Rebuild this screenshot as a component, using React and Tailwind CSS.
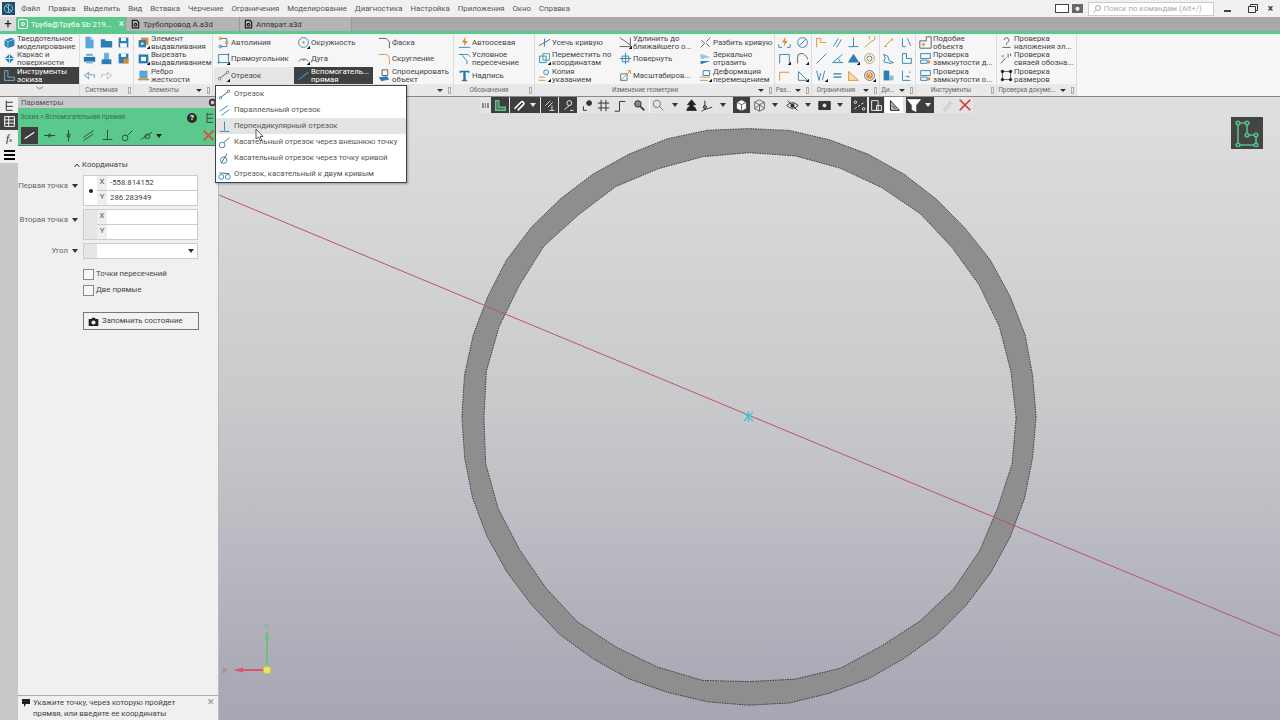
import React from "react";

const B = "#2b7fb5", G = "#555", K = "#222", O = "#e08a2c", T = "#3a9a9a";

function Ic({ s = 13, v = 16, corner, cornerC = "#111", children, className = "" }) {
  return (
    <svg width={s} height={s} viewBox={`0 0 ${v} ${v}`} fill="none" strokeWidth="1.1" className={"shrink-0 " + className}>
      {children}
      {corner && <path d="M16 12v4h-4z" fill={cornerC} />}
    </svg>
  );
}

const icons = {
  solid: <><path d="M2 5l8-3 4 2v8l-8 3-4-3z" fill={B} /><path d="M2 5l4 2 8-3M6 7v8" stroke="#9fd0ee" /></>,
  wire: <><path d="M8 2l6 6-6 6-6-6z" fill={B} /><path d="M2 8h12M8 2v12" stroke="#d6eaf6" /></>,
  sketch: <path d="M2 2h4v8h8v4H2z" stroke="#79b8e0" />,
  doc: <><path d="M3 1h7l3 3v11H3z" fill="#5aa6d8" /><path d="M10 1v3h3" stroke="#fff" /></>,
  folder: <path d="M1 4h5l1 2h8v8H1z" fill={B} />,
  save: <><path d="M2 2h12v12H2z" fill={B} /><path d="M5 2h6v4H5zM4 9h8v5H4z" fill="#fff" /></>,
  print: <><path d="M1 6h14v6H1z" fill="#2a75a8" /><path d="M4 2h8v3H4zM4 11h8v3H4z" fill="#7ab6dc" /></>,
  pdoc: <><path d="M5 1h6v9H5z" fill="#6aaedb" /><path d="M2 9h12v6H2z" fill={B} /></>,
  savec: <><path d="M2 2h12v12H2z" fill={B} /><path d="M5 2h6v4H5z" fill="#fff" /><path d="M8 8h6v6H8z" fill={O} /></>,
  undo: <path d="M14 11V7H7V4L2 8l5 4V9" stroke="#7fa9c9" strokeWidth="1.3" />,
  redo: <path d="M2 11V7h7V4l5 4-5 4V9" stroke="#c4c4c4" strokeWidth="1.3" />,
  extr: <><path d="M5 2h9v9H5z" fill={O} /><path d="M2 5h9v9H2z" fill={B} /><path d="M5 8h3v3H5z" fill="#cfe6f5" /></>,
  cut: <><path d="M2 3h12v11H2z" fill={B} /><path d="M5 6h6v5H5z" fill="#fff" /></>,
  rib: <><path d="M3 2h10v10H3z" fill="#5aa6d8" /><path d="M1 12h14v2H1z" fill={O} /></>,
  auto: <><path d="M4 3h8v10H4" stroke={B} /><circle cx="4" cy="3" r="1.7" stroke={O} /><circle cx="12" cy="8" r="1.7" stroke={O} /><circle cx="4" cy="13" r="1.7" stroke={B} /></>,
  rect: <><path d="M2 3h12v10H2z" stroke={B} /><circle cx="2" cy="13" r="1.2" fill={B} /><circle cx="14" cy="3" r="1.2" fill={B} /></>,
  seg: <><path d="M3 12L13 4" stroke={G} /><circle cx="3" cy="12" r="1.5" stroke={B} fill="#fff" /><circle cx="13" cy="4" r="1.5" stroke={B} fill="#fff" /></>,
  segW: <path d="M2 13L14 4" stroke="#3f93c9" strokeWidth="1.3" />,
  circle: <><circle cx="8" cy="8" r="6" stroke={B} /><circle cx="8" cy="8" r="1.5" fill={O} /></>,
  arc: <><path d="M2 12A7 7 0 0 1 14 12" stroke={B} /><circle cx="8" cy="10" r="1.3" fill={O} /></>,
  cham: <path d="M1 3h9l4 4v8" stroke={G} />,
  fil: <path d="M1 3h7q6 0 6 6v6" stroke={O} />,
  proj: <><path d="M5 1h7v7H5z" stroke={G} /><path d="M1 10l10-1 3 4-10 2z" fill={B} /></>,
  axis: <><path d="M9 1L5 8h3l-1 5 5-7H9z" fill={O} /><path d="M1 14h14" stroke={B} /></>,
  cond: <path d="M1 3h11l3 3M5 4l6 7v4" stroke={B} />,
  T: <path d="M2 2h12v3h-1l-1-1H9.500v9l2 1v1h-7v-1l2-1V4H4L3 5H2z" fill="#2c78ad" />,
  trim: <><path d="M1 12L15 4" stroke={G} /><path d="M8 3v10" stroke={B} /></>,
  move: <><path d="M2 5h8v8H2z" stroke={B} /><path d="M6 2h8v8H6z" stroke={T} /></>,
  copy: <><circle cx="10" cy="4" r="3" stroke={B} /><path d="M1 10h8M1 14h8" stroke={O} /></>,
  extend: <path d="M1 2l13 9M1 13h14M14 2v11" stroke={G} />,
  rot: <path d="M8 1v14M1 8h14M4 5h8v7H4z" stroke={B} />,
  scale: <><path d="M2 6h8v8H2z" stroke={B} /><path d="M2 14L14 2h-4M14 2v4" stroke={O} /></>,
  brk: <path d="M2 14L7 9M9 7l5-5M3 5l4 4M9 9l4 4" stroke={G} />,
  mirror: <><path d="M2 2l12 4-12 3z" fill="#98c6e2" /><path d="M2 15l12-4H2z" fill={B} /></>,
  deform: <><path d="M5 2h8v6H5z" stroke={B} /><path d="M1 10h13M1 14h10" stroke={O} /></>,
  like: <><path d="M1 6h8V1h6v14H1z" stroke={G} /><path d="M4 9h3v3H4z" fill={O} /></>,
  chk: <><path d="M2 2h12v6H2z" stroke={B} /><path d="M2 10h8v4H2z" stroke={B} /><circle cx="12" cy="12" r="2" fill={O} /></>,
  q1: <path d="M5 5a3 3 0 1 1 4 3l-1 1v2M3 14h10" stroke={G} />,
  q2: <path d="M1 14L7 7M2 5h3M10 2v5M13 2v3" stroke={G} />,
  q3: <><path d="M3 3h10v10H3z" stroke={G} /><circle cx="3" cy="3" r="2" fill={K} /><circle cx="13" cy="3" r="2" fill={K} /><circle cx="3" cy="13" r="2" fill={K} /><circle cx="13" cy="13" r="2" fill={K} /></>,
  bolt: <><path d="M9 1L5 8h3l-1 5 5-7H9z" fill={O} /><path d="M1 10v4h4M15 10v4h-4" stroke={B} /></>,
  no: <path d="M8 2a6 6 0 1 0 .01 0M4 12l8-8" stroke={B} />,
  dim: <path d="M2 3h12M2 3v11M14 3v11" stroke={B} />,
  parr: <path d="M2 14V6q0-4 4-4h3l5 5v2" stroke={G} />,
  lshape: <path d="M2 14V4h12" stroke={O} />,
  tri: <path d="M3 14V3l11 11z" stroke={B} />,
  c1: <path d="M2 3h5v5h7M2 3v11" stroke={O} />,
  dbl: <path d="M3 13L9 3M7 14l6-10" stroke={B} />,
  perp: <path d="M8 2v11M2 13h12" stroke={B} />,
  loop: <path d="M2 14L11 6a3.500 3.500 0 1 0-3-2" stroke={O} />,
  slash: <path d="M2 14L14 2" stroke={B} />,
  ang: <path d="M14 3L2 13h13M9 8l3 5" stroke={B} />,
  fill: <path d="M8 2l7 11H1z" fill={B} />,
  ring: <><circle cx="8" cy="8" r="6" stroke={O} /><circle cx="8" cy="8" r="3" stroke={B} /></>,
  vv: <path d="M2 2l3 12 2-9M9 14l3-12" stroke={B} />,
  eq: <path d="M3 6h10M3 10h10" stroke={B} strokeWidth="1.800" />,
  triO: <path d="M2 14V3l12 11z" stroke={O} fill="#f6dcb9" />,
  help: <><circle cx="8" cy="8" r="6" stroke={G} /><circle cx="8" cy="8" r="4" fill={O} /><path d="M6.500 7a1.500 1.500 0 1 1 2 1.500V10" stroke="#fff" /></>,
  d1: <path d="M3 13L13 3M3 13h3M13 3v3" stroke={O} />,
  d2: <path d="M3 3v10h4M9 3l4 9" stroke={B} />,
  d3: <path d="M2 3l5 2 2 6 5 2-4 1-8-2 2-5z" stroke={B} />,
  d4: <path d="M3 2h5v6h6v6H3z" stroke={B} />,
  d5: <><path d="M2 2h7v12H2z" fill={B} /><path d="M9 8h5v6H9z" fill="#8db9d8" /></>,
  d6: <path d="M3 2v12h10M7 9h4v2M12 3v2" stroke={B} />,
};

const I = ({ n, s, corner, cornerC }) => <Ic s={s} corner={corner} cornerC={cornerC}>{icons[n]}</Ic>;

function Row({ n, a, b, active, corner, w, hi }) {
  const cls = active
    ? "bg-[#404040] text-white"
    : hi
    ? "bg-[#e6e6e6] text-[#444]"
    : "text-[#444]";
  return (
    <div className={`h-[16.500px] flex items-center gap-[1px] pl-[3px] ${cls}`} style={w ? { width: w } : undefined}>
      <I n={n} corner={corner} cornerC={active ? "#fff" : "#111"} />
      <div className="leading-[8px] whitespace-nowrap pt-[1px]">
        <div>{a}</div>
        {b && <div>{b}</div>}
      </div>
    </div>
  );
}

function Group({ w, label, caret, grip = true, children, chev }) {
  return (
    <div className="flex flex-col border-r border-[#dcdcdc] shrink-0" style={{ width: w }}>
      <div className="h-[50px] flex">{children}</div>
      <div className="h-[12px] bg-[#e9e9e9] flex items-center text-[6.300px] text-[#666] whitespace-nowrap">
        <span className="flex-1 text-center pt-[2px]">{chev ? <span className="text-[8px] leading-none text-[#777]">︾</span> : label}</span>
        {caret && <span className="ml-[3px] border-x-[3px] border-t-[3px] border-x-transparent border-t-[#333]" />}
        {grip && <span className="ml-[5px] mr-[2px] w-[3px] h-[7px] border border-[#aaa]" />}
      </div>
    </div>
  );
}

function IconGrid({ cols, w, items, px = 0 }) {
  return (
    <div className="grid items-center justify-items-center" style={{ gridTemplateColumns: `repeat(${cols}, 1fr)`, gridAutoRows: "16.500px", width: w, paddingInline: px }}>
      {items.map((it, i) => {
        const corner = it.endsWith("*");
        return <I key={i} n={corner ? it.slice(0, -1) : it} corner={corner} s={13} />;
      })}
    </div>
  );
}

function Caret({ c = "#333", className = "" }) {
  return <span className={"inline-block border-x-[3.500px] border-t-[4px] border-x-transparent " + className} style={{ borderTopColor: c }} />;
}

const TB = ({ dark, w = 18, children }) => (
  <div className={`h-[16px] flex items-center justify-center shrink-0 ${dark ? "bg-[#3e3e3e]" : ""}`} style={{ width: w }}>{children}</div>
);

const S = ({ c = "#333", sw = 1.2, children, s = 13 }) => (
  <svg width={s} height={s} viewBox="0 0 16 16" fill="none" stroke={c} strokeWidth={sw} className="shrink-0">{children}</svg>
);

function Toolbar() {
  return (
    <div className="ml-[261px] h-[16px] flex w-[493px] bg-[#e4e4e4] text-[#333] relative z-[1]">
      <TB w={11}><span className="w-[7px] h-[5px] border-x border-[#888] bg-[repeating-linear-gradient(90deg,#888_0,#888_1px,transparent_1px,transparent_2px)]" /></TB>
      <TB dark w={18}><S c="#5ec98d" sw={1.5}><path d="M2 2h4v8h8v4H2z" fill="#4a7a5c" /></S></TB>
      <div className="w-[1px]" />
      <TB dark w={16}><S c="#fff" sw={2}><path d="M3 12L11 4a2 2 0 0 1 3 3l-7 7" /></S></TB>
      <TB dark w={14}><Caret c="#eee" /></TB>
      <div className="w-[1px]" />
      <TB dark w={17}><S c="#ddd"><path d="M3 8l6-6M6 10l6-6M8 14h6M11 8v6" /></S></TB>
      <div className="w-[1px]" />
      <TB dark w={18}><S c="#eee"><circle cx="9" cy="5" r="3" /><path d="M3 13l6-5M10 14h4" /></S></TB>
      <div className="w-[2px]" />
      <TB w={16}><S><circle cx="10" cy="5" r="3" fill="#333" /><path d="M3 14V9M3 14h4" /></S></TB>
      <TB w={16}><S><path d="M5 1v14M11 1v14M1 5h14M1 11h14" /></S></TB>
      <TB w={16}><S><path d="M2 15h6V3h7" /></S></TB>
      <div className="w-[4px]" />
      <TB w={16}><S><circle cx="6" cy="6" r="4" fill="#888" /><path d="M9 9l5 5" strokeWidth="2" /></S></TB>
      <div className="w-[2px]" />
      <div className="w-[1px] bg-[#fff]" />
      <TB w={16}><S c="#777"><circle cx="6" cy="6" r="4.500" /><path d="M9 9l5 5" /></S></TB>
      <TB w={18}><Caret /></TB>
      <TB w={14}><S c="#222" sw={1}><path d="M8 1l5 6h-3v3H6V7H3zM2 14h12l-2-4H4z" fill="#222" /></S></TB>
      <TB w={16}><S><path d="M6 2v11l9-3M6 13l-4 2" /><circle cx="6" cy="10" r="2" /></S></TB>
      <TB w={18}><Caret /></TB>
      <div className="w-[1px]" />
      <TB dark w={17}><S c="#444" sw={1}><path d="M8 1l6 3v8l-6 3-6-3V4z" fill="#fff" /><path d="M2 4l6 3 6-3M8 7v8" /></S></TB>
      <TB w={18}><S c="#555" sw={1}><path d="M8 1l6 3v8l-6 3-6-3V4zM2 4l6 3 6-3M8 7v8M2 12l6-5 6 5" /></S></TB>
      <TB w={14}><Caret /></TB>
      <TB w={20}><S><path d="M1 8q7-7 14 0-7 7-14 0zM2 2l12 12" /><circle cx="8" cy="8" r="2" fill="#333" /></S></TB>
      <TB w={12}><Caret /></TB>
      <TB w={20}><S><path d="M1 3h14v10H1z" fill="#333" /><circle cx="8" cy="8" r="3" fill="#ddd" /></S></TB>
      <TB w={12}><Caret /></TB>
      <div className="w-[5px]" />
      <TB dark w={16}><S c="#eee"><path d="M2 12L14 4" strokeDasharray="3 2" /><circle cx="3" cy="4" r="1.500" /><circle cx="13" cy="12" r="1.500" /></S></TB>
      <div className="w-[2px]" />
      <TB dark w={15}><S c="#eee"><path d="M2 2h8v12H2zM8 8h6v6H8z" /></S></TB>
      <div className="w-[1px]" />
      <TB w={18}><div className="w-full h-full bg-white flex items-center justify-center"><S c="#222"><path d="M3 2v12h11zM5 8l4 4" fill="#bbb" /></S></div></TB>
      <div className="w-[3px]" />
      <TB dark w={15}><S c="#fff" s={14}><path d="M1 2h14l-5 6v7l-4-2V8z" fill="#fff" /></S></TB>
      <TB dark w={13}><Caret c="#eee" /></TB>
      <div className="w-[2px]" />
      <TB w={22}><S c="#bbb"><path d="M3 13L10 5l2 2-7 8zM10 2l4 4" /></S></TB>
      <TB w={14}><S c="#d93a3a" sw={2} s={14}><path d="M2 2l12 12M14 2L2 14" /></S></TB>
    </div>
  );
}

function ringPoints(cx, cy, rx, ry, n, jitter, seed) {
  const pts = [];
  for (let i = 0; i < n; i++) {
    const a = (i / n) * Math.PI * 2;
    const j = Math.sin(i * 12.9898 + seed) * 43758.5453;
    const d = (j - Math.floor(j) - 0.5) * jitter;
    pts.push(`${(cx + (rx + d) * Math.cos(a)).toFixed(1)} ${(cy + (ry + d) * Math.sin(a)).toFixed(1)}`);
  }
  return "M" + pts.join("L") + "Z";
}

function Scene() {
  const ox = 219, oy = 97;
  const outer = ringPoints(748.5 - ox, 416.5 - oy, 287.5, 288.5, 44, 2, 1);
  const inner = ringPoints(749 - ox, 417.5 - oy, 266, 265.5, 36, 3, 5);
  return (
    <svg className="absolute left-0 top-0" width="1061" height="623" viewBox="0 0 1061 623">
      <path d={outer + inner} fill="#8e8e8e" fillRule="evenodd" />
      <path d={outer} fill="none" stroke="#222" strokeWidth="0.8" strokeDasharray="1.500 1" />
      <path d={inner} fill="none" stroke="#222" strokeWidth="0.8" strokeDasharray="1.500 1" />
      <path d={`M0 ${195 - oy}L1061 ${636 - oy}`} stroke="#bd4f78" strokeWidth="1" />
      <path d={`M${744 - ox} ${413 - oy}l9 8M${753 - ox} ${412 - oy}l-9 9M${748.500 - ox} ${411 - oy}v11`} stroke="#35c8d2" strokeWidth="1.200" />
      <g transform={`translate(${267 - ox} ${670 - oy})`}>
        <path d="M0 0V-38" stroke="#6fbf7f" strokeWidth="2" />
        <path d="M-2.500 -30L0 -38L2.500 -30z" fill="#6fbf7f" />
        <path d="M0 0H-30" stroke="#d8566a" strokeWidth="2" />
        <path d="M-24 -2.500L-34 0L-24 2.500z" fill="#d8566a" />
        <circle r="4" fill="#e8e46a" stroke="#c9b94a" strokeWidth="1" />
        <text x="-45" y="3" fontSize="8" fill="#d8566a" fontFamily="Liberation Sans, sans-serif">X</text>
        <text x="-3" y="-41" fontSize="8" fill="#6fbf7f" fontFamily="Liberation Sans, sans-serif">Y</text>
      </g>
    </svg>
  );
}

function Field({ label, left, xv, yv, dot }) {
  return (
    <div className="flex items-start">
      <div className="w-[60px] text-[#666] pt-[5px] flex justify-end items-center gap-[4px] whitespace-nowrap">
        {label}<Caret c="#333" />
      </div>
      <div className="ml-[5px] w-[115px] h-[31px] border border-[#ccc] flex bg-white">
        <div className={`w-[13px] flex items-center justify-center ${left}`}>{dot && <span className="w-[4px] h-[4px] rounded-full bg-[#222]" />}</div>
        <div className="flex-1 flex flex-col">
          <div className="h-[15px] border-b border-[#ccc] flex items-center"><span className="w-[10px] h-full bg-[#eee] text-center text-[#555]">X</span><span className="ml-[3px] text-[#444]">{xv}</span></div>
          <div className="h-[15px] flex items-center"><span className="w-[10px] h-full bg-[#eee] text-center text-[#555]">Y</span><span className="ml-[3px] text-[#444]">{yv}</span></div>
        </div>
      </div>
    </div>
  );
}

function Panel() {
  return (
    <div className="w-[200px] shrink-0 flex flex-col bg-[#f0f0f0] text-[#444]">
      <div className="h-[11px] bg-[#c8c8c8] flex items-center pl-[3px] text-[#555]">
        Параметры
        <svg className="ml-auto mr-[1px]" width="9" height="9" viewBox="0 0 16 16"><circle cx="8" cy="8" r="5" fill="none" stroke="#333" strokeWidth="3" /></svg>
      </div>
      <div className="h-[38px] bg-[#5cc98c] border-b border-[#666] flex flex-col">
        <div className="h-[19px] flex items-center pl-[2px] pr-[2px] text-[6.600px] text-[#3b6a50]">
          Эскиз &gt; Вспомогательная прямая
          <span className="ml-auto w-[10px] h-[10px] mt-[1px] rounded-full bg-[#2d2d2d] text-white text-[8px] font-bold flex items-center justify-center">?</span>
          <span className="ml-[6px]"><S c="#2d4f3b"><path d="M5 2v12M5 4h7M5 9h7M5 14h7" /></S></span>
        </div>
        <div className="flex items-center h-[17px] pl-[3px] gap-[2.500px]">
          <div className="w-[17px] h-[17px] bg-[#3e3e3e] flex items-center justify-center"><S c="#fff" sw={1.500}><path d="M2 12L14 4" /></S></div>
          <div className="w-[17px] flex justify-center"><S c="#2d4f3b"><path d="M1 8h14" /><circle cx="8" cy="8" r="2" /></S></div>
          <div className="w-[17px] flex justify-center"><S c="#2d4f3b"><path d="M8 1v14" /><circle cx="8" cy="8" r="2" /></S></div>
          <div className="w-[17px] flex justify-center"><S c="#2d4f3b"><path d="M2 10L14 2M2 14L14 6" /></S></div>
          <div className="w-[17px] flex justify-center"><S c="#2d4f3b"><path d="M8 1v12M2 13h12" /></S></div>
          <div className="w-[17px] flex justify-center"><S c="#2d4f3b"><circle cx="5" cy="11" r="3.500" /><path d="M8 8l6-6" /></S></div>
          <div className="w-[17px] flex justify-center"><S c="#2d4f3b"><path d="M1 13L15 4" /><circle cx="9" cy="9" r="3" /></S></div>
          <Caret c="#222" className="ml-[-2px]" />
          <div className="ml-auto mr-[3px]"><S c="#e0483a" sw={2}><path d="M2 2l12 12M14 2L2 14" /></S></div>
        </div>
      </div>
      <div className="flex-1 flex flex-col">
        <div className="mt-[14px] h-[10px] flex items-center pl-[56px] gap-[2px] text-[#444]">
          <svg width="6" height="5" viewBox="0 0 6 5" fill="none" stroke="#333"><path d="M0.500 4L3 1l2.500 3" /></svg>
          Координаты
        </div>
        <div className="mt-[5px] flex flex-col gap-[3px]">
          <Field label="Первая точка" left="bg-white" xv="-558.814152" yv="286.283949" dot />
          <Field label="Вторая точка" left="bg-[#e6e6e6]" />
        </div>
        <div className="flex items-center mt-[3px]">
          <div className="w-[60px] flex justify-end items-center gap-[4px] text-[#666]">Угол<Caret /></div>
          <div className="ml-[5px] w-[115px] h-[16px] border border-[#ccc] bg-white flex items-center">
            <div className="w-[13px] h-full bg-[#e6e6e6]" />
            <Caret className="ml-auto mr-[3px]" />
          </div>
        </div>
        <label className="ml-[65px] mt-[9px] flex items-center gap-[2px] h-[12px]"><span className="w-[11px] h-[11px] border border-[#888] bg-[#f7f7f7]" />Точки пересечений</label>
        <label className="ml-[65px] mt-[4px] flex items-center gap-[2px] h-[12px]"><span className="w-[11px] h-[11px] border border-[#888] bg-[#f7f7f7]" />Две прямые</label>
        <div className="ml-[65px] mt-[16px] w-[116px] h-[18px] border border-[#777] flex items-center pl-[4px] gap-[3px] bg-[#f2f2f2]">
          <svg width="11" height="9" viewBox="0 0 16 13"><path d="M1 3h4l1-2h4l1 2h4v10H1z" fill="#222" /><circle cx="8" cy="8" r="3" fill="#eee" /></svg>
          Запомнить состояние
        </div>
      </div>
      <div className="h-[25px] border-t border-[#aaa] flex pl-[4px] pt-[2px] gap-[3px] text-[#444] leading-[10.500px]">
        <svg className="mt-[1px] shrink-0" width="8" height="8" viewBox="0 0 8 8"><path d="M0 0h8v5H4L2 8V5H0z" fill="#222" /></svg>
        <div>Укажите точку, через которую пройдет<br />прямая, или введите ее координаты</div>
        <span className="ml-auto mr-[3px] text-[#888] text-[9px] leading-none">✕</span>
      </div>
    </div>
  );
}

const menu = ["Файл", "Правка", "Выделить", "Вид", "Вставка", "Черчение", "Ограничения", "Моделирование", "Диагностика", "Настройка", "Приложения", "Окно", "Справка"];

const ddItems = [
  ["Отрезок", <><path d="M3 12L13 4" stroke={G} /><circle cx="3" cy="12" r="1.500" stroke={B} fill="#fff" /><circle cx="13" cy="4" r="1.500" stroke={B} fill="#fff" /></>],
  ["Параллельный отрезок", <path d="M2 9L12 2M4 14L14 7" stroke={B} />],
  ["Перпендикулярный отрезок", <path d="M8 2v11M2 14h12" stroke={B} />],
  ["Касательный отрезок через внешнюю точку", <><circle cx="5" cy="11" r="3.500" stroke={B} /><path d="M7 8l7-6" stroke={G} /></>],
  ["Касательный отрезок через точку кривой", <><circle cx="7" cy="10" r="4" stroke={B} /><path d="M4 14L11 2" stroke={G} /></>],
  ["Отрезок, касательный к двум кривым", <><circle cx="4" cy="11" r="3" stroke={B} /><circle cx="12" cy="11" r="3" stroke={B} /><path d="M2 6l12 1" stroke={G} /></>],
];

export default function App() {
  return (
    <div className="relative w-[1280px] h-[720px] overflow-hidden flex flex-col bg-[#d0d0d0] text-[7.800px] text-[#444]" style={{ fontFamily: 'Roboto, "Noto Sans", sans-serif' }}>
      {/* menu bar */}
      <div className="h-[17px] bg-[#f0f0f0] flex items-center shrink-0">
        <div className="ml-[2px] w-[13px] h-[13px] bg-[#1d4f70] flex items-center justify-center">
          <svg width="11" height="11" viewBox="0 0 16 16" fill="none" stroke="#9fd0e6" strokeWidth="1.200"><circle cx="8" cy="8" r="6" /><path d="M3 3l10 10M8 2v12" /></svg>
        </div>
        <div className="ml-[6px] pt-[1px] flex gap-[8px] text-[#555]">
          {menu.map((m) => <span key={m}>{m}</span>)}
        </div>
        <div className="ml-auto flex items-center">
          <span className="w-[14px] h-[9px] border border-[#444] bg-white" />
          <svg className="ml-[3px]" width="11" height="9" viewBox="0 0 16 13"><path d="M0 0h16v13H0z" fill="#666" /><circle cx="8" cy="7" r="3" fill="#eee" /></svg>
          <div className="ml-[5px] w-[126px] h-[14px] bg-white border border-[#ccc] flex items-center pl-[4px] gap-[3px] text-[#aaa]">
            <svg width="8" height="8" viewBox="0 0 16 16" fill="none" stroke="#888" strokeWidth="1.500"><circle cx="10" cy="6" r="5" /><path d="M6 10l-5 5" /></svg>
            Поиск по командам (Alt+/)
          </div>
          <div className="ml-[10px] w-[7px] h-[1.500px] mt-[5px] bg-[#444]" />
          <svg className="ml-[17px]" width="10" height="9" viewBox="0 0 10 9" fill="none" stroke="#333"><path d="M0.500 2.500h7v6h-7zM2.500 2.500v-2h7v6h-2" /></svg>
          <span className="ml-[10px] mr-[7px] text-[#333] text-[10px] leading-none font-bold">×</span>
        </div>
      </div>
      {/* tabs */}
      <div className="h-[14px] bg-[#a9a9a9] flex items-stretch shrink-0 whitespace-nowrap">
        <div className="w-[16px] bg-[#dcdcdc] text-center text-[#222] text-[13px] leading-[13px]">+</div>
        <div className="w-[110px] bg-[#5cc98c] text-white flex items-center pl-[2px] gap-[3px]">
          <span className="w-[10px] h-[10px] rounded-[2px] border-[1.500px] border-white flex items-center justify-center"><span className="w-[4px] h-[4px] rounded-full border border-white" /></span>
          <span className="pt-[1px]">Труба@Труба Sb 219...</span>
          <span className="ml-auto mr-[2px] text-[10px] leading-none">×</span>
        </div>
        <div className="w-[113px] ml-[1px] bg-[#b4b4b4] flex items-center pl-[3px] gap-[2px] border-r border-[#999] text-[#333]">
          <svg width="11" height="10" viewBox="0 0 16 16" fill="none" stroke="#222" strokeWidth="2"><path d="M3 2h7l3 3v9H3z" /><circle cx="8" cy="9" r="2" /></svg>
          <span className="pt-[1px]">Трубопровод А.a3d</span>
        </div>
        <div className="w-[112px] bg-[#b4b4b4] flex items-center pl-[3px] gap-[2px] border-r border-[#999] text-[#333]">
          <svg width="11" height="10" viewBox="0 0 16 16" fill="none" stroke="#222" strokeWidth="2"><path d="M3 2h7l3 3v9H3z" /><circle cx="8" cy="9" r="2" /></svg>
          <span className="pt-[1px]">Аппарат.a3d</span>
        </div>
      </div>
      <div className="h-[3px] bg-[#5cc98c] shrink-0" />
      {/* ribbon */}
      <div className="h-[63px] bg-[#f6f6f6] border-b border-[#888] flex shrink-0 text-[#444]">
        <Group w={80} chev grip={false}>
          <div className="flex flex-col w-full">
            <Row n="solid" a="Твердотельное" b="моделирование" />
            <Row n="wire" a="Каркас и" b="поверхности" />
            <Row n="sketch" a="Инструменты" b="эскиза" active />
          </div>
        </Group>
        <Group w={54} label="Системная">
          <IconGrid cols={3} w={54} px={1} items={["doc", "folder", "save", "print", "pdoc", "savec", "undo", "redo"]} />
        </Group>
        <Group w={79} label="Элементы" caret>
          <div className="flex flex-col w-full">
            <Row n="extr" a="Элемент" b="выдавливания" corner />
            <Row n="cut" a="Вырезать" b="выдавливанием" corner />
            <Row n="rib" a="Ребро" b="жесткости" />
          </div>
        </Group>
        <Group w={241} label="" caret>
          <div className="w-[81px] flex flex-col pl-[1px]">
            <Row n="auto" a="Автолиния" />
            <Row n="rect" a="Прямоугольник" corner />
            <Row n="seg" a="Отрезок" corner hi />
          </div>
          <div className="w-[81px] flex flex-col">
            <Row n="circle" a="Окружность" corner />
            <Row n="arc" a="Дуга" corner />
            <Row n="segW" a="Вспомогатель..." b="прямая" active w={79} />
          </div>
          <div className="flex-1 flex flex-col">
            <Row n="cham" a="Фаска" />
            <Row n="fil" a="Скругление" />
            <Row n="proj" a="Спроецировать" b="объект" />
          </div>
        </Group>
        <Group w={81} label="Обозначения">
          <div className="flex flex-col w-full pl-[1px]">
            <Row n="axis" a="Автоосевая" />
            <Row n="cond" a="Условное" b="пересечение" />
            <Row n="T" a="Надпись" />
          </div>
        </Group>
        <Group w={240} label="Изменение геометрии" caret>
          <div className="w-[81px] flex flex-col">
            <Row n="trim" a="Усечь кривую" />
            <Row n="move" a="Переместить по" b="координатам" corner />
            <Row n="copy" a="Копия" b="указанием" corner />
          </div>
          <div className="w-[80px] flex flex-col">
            <Row n="extend" a="Удлинить до" b="ближайшего о..." corner />
            <Row n="rot" a="Повернуть" />
            <Row n="scale" a="Масштабиров..." />
          </div>
          <div className="flex-1 flex flex-col">
            <Row n="brk" a="Разбить кривую" />
            <Row n="mirror" a="Зеркально" b="отразить" />
            <Row n="deform" a="Деформация" b="перемещением" corner />
          </div>
        </Group>
        <Group w={37} label="Раз..." caret>
          <IconGrid cols={2} w={37} items={["bolt", "no", "dim*", "parr*", "lshape", "tri*"]} />
        </Group>
        <Group w={68} label="Ограничения" caret>
          <IconGrid cols={4} w={68} px={2} items={["c1", "dbl", "perp", "loop", "slash", "ang", "fill*", "ring", "vv*", "eq", "triO", "help*"]} />
        </Group>
        <Group w={36} label="Ди..." caret>
          <IconGrid cols={2} w={36} items={["d1", "d2", "d3", "d4", "d5", "d6"]} />
        </Group>
        <Group w={81} label="Инструменты">
          <div className="flex flex-col w-full">
            <Row n="like" a="Подобие" b="объекта" />
            <Row n="chk" a="Проверка" b="замкнутости д..." />
            <Row n="chk" a="Проверка" b="замкнутости о..." />
          </div>
        </Group>
        <Group w={80} label="Проверка докуме..." caret>
          <div className="flex flex-col w-full">
            <Row n="q1" a="Проверка" b="наложения эл..." />
            <Row n="q2" a="Проверка" b="связей обозна..." />
            <Row n="q3" a="Проверка" b="размеров" />
          </div>
        </Group>
      </div>
      {/* main */}
      <div className="flex-1 flex min-h-0">
        <div className="w-[18px] shrink-0 bg-[#c8c8c8] flex flex-col">
          <div className="h-[16px] bg-[#f0f0f0] flex items-center justify-center"><S c="#333"><path d="M4 2v12M4 4h8M4 9h8M4 14h8" /></S></div>
          <div className="h-[17px] bg-[#404040] flex items-center justify-center"><S c="#fff"><path d="M2 2h12v12H2zM2 6h12M2 10h12M7 2v12" /></S></div>
          <div className="h-[17px] bg-[#f0f0f0] flex items-center justify-center italic text-[11px] text-[#222]" style={{ fontFamily: '"Liberation Serif", serif' }}>f<sub className="text-[7px]">x</sub></div>
          <div className="h-[16px] bg-[#f0f0f0] flex flex-col items-center justify-center gap-[2px]">
            <span className="w-[11px] h-[2px] bg-black" /><span className="w-[11px] h-[2px] bg-black" /><span className="w-[11px] h-[2px] bg-black" />
          </div>
        </div>
        <Panel />
        <div className="flex-1 relative bg-gradient-to-b from-[#dfdfdf] via-[#c9c9cc] to-[#a6a6b4] border-l border-[#bbb] flex flex-col">
          <Scene />
          <Toolbar />
          <div className="absolute right-[17px] top-[20px] w-[32px] h-[32px] bg-[#444] flex items-center justify-center">
            <svg width="28" height="28" viewBox="0 0 28 28" fill="none" stroke="#53c186" strokeWidth="1.600">
              <path d="M5 4h9v12h9v10H5z" />
              <g fill="#444"><circle cx="5" cy="4" r="1.800" /><circle cx="14" cy="4" r="1.800" /><circle cx="14" cy="16" r="1.800" /><circle cx="23" cy="16" r="1.800" /><circle cx="23" cy="26" r="1.800" /><circle cx="5" cy="26" r="1.800" /></g>
            </svg>
          </div>
        </div>
      </div>
      {/* dropdown */}
      <div className="absolute left-[215px] top-[85px] w-[192px] h-[98px] bg-white border border-[#444] shadow-[1px_1px_2px_rgba(0,0,0,0.3)] z-10 text-[#555]">
        {ddItems.map(([t, ic], i) => (
          <div key={t} className={`h-[16px] flex items-center pl-[2px] gap-[3px] whitespace-nowrap ${i === 2 ? "bg-[#e4e4e4]" : ""}`}>
            <Ic s={13}>{ic}</Ic>
            {t}
          </div>
        ))}
        <svg className="absolute left-[39px] top-[42px]" width="10" height="14" viewBox="0 0 10 14">
          <path d="M1 1v10l2.500-2 2 4 1.500-1-2-3.500h3z" fill="#fff" stroke="#333" strokeWidth="0.800" />
        </svg>
      </div>
    </div>
  );
}
